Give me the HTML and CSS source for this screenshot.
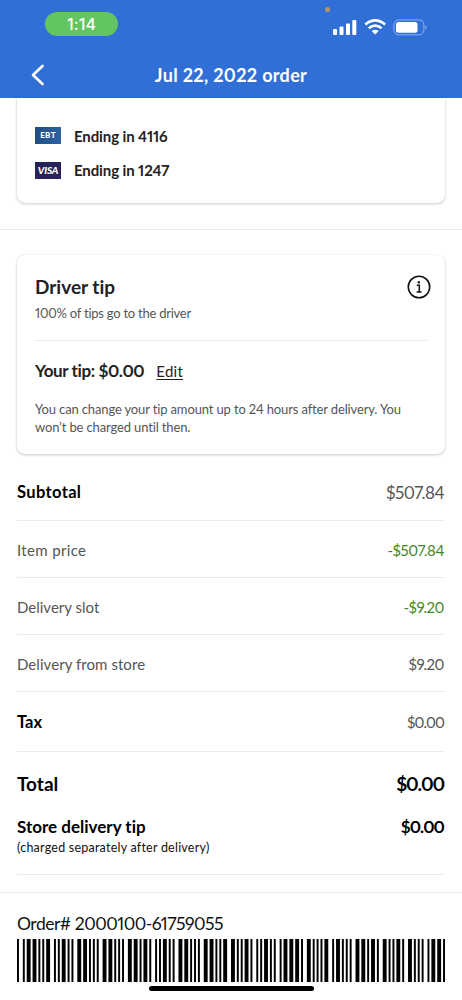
FILE: index.html
```html
<!DOCTYPE html>
<html lang="en">
<head>
<meta charset="utf-8">
<title>Jul 22, 2022 order</title>
<link rel="stylesheet" href="styles.css">
</head>
<body>
<header class="header">
  <div class="status">
    <span class="clock">1:14</span>
    <i class="mic-dot"></i>
    <svg class="status-icons" width="96" height="20" viewBox="0 0 96 20" fill="#fff">
      <rect x="2" y="11" width="4" height="6" rx="1"/><rect x="8.500" y="8.500" width="4" height="8.500" rx="1"/><rect x="15" y="5.500" width="4" height="11.500" rx="1"/><rect x="21.300" y="2" width="4" height="15" rx="1"/>
      <path d="M34.300 6.500Q44.200-1.700 54.100 6.500" fill="none" stroke="#fff" stroke-width="2.700"/>
      <path d="M37.800 10.300Q44.200 4.900 50.600 10.300" fill="none" stroke="#fff" stroke-width="2.600"/>
      <path d="M40.700 13Q44.200 10.300 47.700 13L44.200 16.600Z"/>
      <rect x="62.900" y="2" width="30" height="14.800" rx="4.500" fill="none" stroke="#8fb2ee" stroke-width="1"/>
      <rect x="65" y="4" width="21.500" height="10.800" rx="2.500"/><path d="M94.300 7.200Q97 9.400 94.300 11.600Z" fill="#8fb2ee"/>
    </svg>
  </div>
  <div class="nav">
    <svg class="back" width="14" height="22" viewBox="0 0 14 22"><path d="M11.500 2L2 11L11.500 20" fill="none" stroke="#fff" stroke-width="2.600" stroke-linecap="round" stroke-linejoin="round"/></svg>
    <h1 class="title">Jul 22, 2022 order</h1>
  </div>
</header>
<main>
  <section class="payment">
    <div class="card payment-card">
      <div class="method"><span class="logo ebt">EBT</span><span>Ending in 4116</span></div>
      <div class="method"><span class="logo visa">VISA</span><span>Ending in 1247</span></div>
    </div>
  </section>
  <section class="content">
    <div class="card tip-card">
      <div class="tip-head">
        <div><h2 class="tip-title">Driver tip</h2><p class="tip-sub">100% of tips go to the driver</p></div>
        <svg class="info" width="24" height="24" viewBox="0 0 24 24"><circle cx="12" cy="12" r="10.700" fill="none" stroke="#111" stroke-width="1.600"/><circle cx="11.800" cy="7.200" r="1.200" fill="#111"/><path d="M9.800 10.200H12.300V16.700M9.600 17H14.600" fill="none" stroke="#111" stroke-width="1.500"/></svg>
      </div>
      <div class="tip-row"><span class="tip-value">Your tip: $0.00</span><a class="edit">Edit</a></div>
      <p class="note">You can change your tip amount up to 24 hours after delivery. You<br>won’t be charged until then.</p>
    </div>
    <div class="row row-subtotal"><span class="strong">Subtotal</span><span class="amount amount-large">$507.84</span></div>
    <div class="row"><span class="label-wide">Item price</span><span class="amount green">-$507.84</span></div>
    <div class="row"><span>Delivery slot</span><span class="amount green">-$9.20</span></div>
    <div class="row"><span class="label-long">Delivery from store</span><span class="amount">$9.20</span></div>
    <div class="row row-tax"><span class="strong-tax">Tax</span><span class="amount amount-tax">$0.00</span></div>
    <div class="total"><span>Total</span><span class="total-amount">$0.00</span></div>
    <div class="store-tip"><div class="store-line"><span>Store delivery tip</span><span class="store-amount">$0.00</span></div><p class="charged">(charged separately after delivery)</p></div>
  </section>
  <footer class="order">
    <p class="order-no">Order# 2000100-61759055</p>
    <svg class="barcode" viewBox="0 0 220 43" preserveAspectRatio="none" data-code="*200010061759055*"></svg>
  </footer>
</main>
<div class="home-bar"></div>
<script src="barcode.js"></script>
</body>
</html>
```
FILE: styles.css
```css
* { box-sizing: border-box; }
body { margin: 0; width: 462px; height: 1000px; overflow: hidden; background: #fff; font-family: Lato, "Liberation Sans", sans-serif; color: #000; font-variant-numeric: proportional-nums; font-variant-ligatures: none; white-space: nowrap; }
h1, h2, p { margin: 0; font-weight: inherit; }
.header { height: 98px; background: #306fd5; color: #fff; display: flex; flex-direction: column; }
.status { height: 52px; position: relative; display: flex; justify-content: space-between; padding: 12px 35.5px 0 45px; }
.clock { width: 73px; height: 24px; border-radius: 12px; background: #61c561; font: 500 16px/24px Inter, sans-serif; text-align: center; letter-spacing: .1px; }
.status-icons { margin-top: 6px; }
.mic-dot { position: absolute; left: 325px; top: 7px; width: 5px; height: 5px; border-radius: 50%; background: #bd9461; }
.nav { height: 46px; display: grid; grid-template-columns: 31px 1fr 31px; align-items: center; }
.back { margin-left: 30.5px; }
.title { text-align: center; font-size: 18px; font-weight: 700; line-height: 24px; letter-spacing: .33px; padding-bottom: 1px; }
.payment { height: 132px; border-bottom: 1px solid #ebebeb; padding: 0 17px; }
.card { background: #fff; border-radius: 8px; box-shadow: 0 1px 3px #0003, 0 0 1px #0002; }
.payment-card { height: 105px; border-radius: 0 0 8px 8px; padding: 20.5px 18px 0; }
.method { display: flex; align-items: center; gap: 13px; height: 34.5px; font-size: 15px; font-weight: 700; color: #222; letter-spacing: -.11px; }
.logo { width: 26px; height: 17px; color: #fff; text-align: center; }
.ebt { background: linear-gradient(90deg, #214e83, #2d62a3); font: 900 8px/17px Lato, sans-serif; letter-spacing: .3px; }
.visa { background: #272358; font: italic 900 10px/17px Lato, sans-serif; }
.content { padding: 25px 17px 0; height: 663px; border-bottom: 1px solid #ebebeb; }
.tip-card { height: 199px; padding: 19px 17px 0 18px; }
.tip-head { display: flex; justify-content: space-between; height: 67px; border-bottom: 1px solid #ebebeb; }
.info { margin: 1px -3px 0 0; }
.tip-title { font-size: 19px; font-weight: 700; line-height: 26px; color: #222; }
.tip-sub { font-size: 13px; line-height: 18px; margin-top: 4px; color: #555; letter-spacing: -.24px; }
.tip-row { display: flex; align-items: baseline; gap: 12px; margin-top: 18px; line-height: 24px; font-size: 17px; font-weight: 700; color: #222; }
.tip-value { letter-spacing: -.39px; }
.edit { font-size: 15px; font-weight: 400; text-decoration: underline; text-underline-offset: 2px; letter-spacing: .26px; }
.note { margin-top: 17px; font-size: 13px; line-height: 18px; color: #555; letter-spacing: -.14px; }
.row { height: 57px; padding-top: 1px; display: flex; align-items: center; justify-content: space-between; border-bottom: 1px solid #ebebeb; font-size: 15px; color: #555; }
.row-subtotal { height: 67px; padding-top: 10px; }
.row-tax { height: 60px; }
.strong { font-size: 16.5px; font-weight: 700; color: #000; letter-spacing: .36px; }
.strong-tax { font-size: 16.5px; font-weight: 700; color: #000; }
.label-wide { letter-spacing: .35px; }
.label-long { letter-spacing: .06px; }
.amount { letter-spacing: -.44px; padding-right: 1px; }
.amount-large { font-size: 17px; letter-spacing: -.55px; }
.amount-tax { letter-spacing: -.85px; }
.green { color: #44862b; }
.total { display: flex; justify-content: space-between; margin-top: 19px; font-size: 19px; line-height: 26px; font-weight: 700; }
.total-amount { letter-spacing: -1.1px; padding-right: 1px; }
.store-tip { margin-top: 18px; height: 60px; border-bottom: 1px solid #ebebeb; }
.store-line { display: flex; justify-content: space-between; font-size: 17px; line-height: 24px; font-weight: 700; }
.store-amount { letter-spacing: -.9px; padding-right: 1px; }
.charged { font-size: 12.5px; line-height: 18px; color: #111; letter-spacing: .23px; }
.order { padding: 18px 17px 0; }
.order-no { font-size: 17.5px; line-height: 26px; color: #111; letter-spacing: -.48px; }
.barcode { display: block; width: 428px; height: 43px; margin-top: 2px; }
.home-bar { position: absolute; left: 149px; top: 986px; width: 165px; height: 5px; border-radius: 3px; background: #000; }
```
FILE: barcode.js
```js
// Code 39: bars and spaces alternate; n = one module, w = two modules.
const CODE39 = {
  "0": "nnnwwnwnn", "1": "wnnwnnnnw", "2": "nnwwnnnnw", "3": "wnwwnnnnn",
  "4": "nnnwwnnnw", "5": "wnnwwnnnn", "6": "nnwwwnnnn", "7": "nnnwnnwnw",
  "8": "wnnwnnwnn", "9": "nnwwnnwnn", "*": "nwnnwnwnn"
};
const barcode = document.querySelector(".barcode");
let x = 0, d = "";
for (const ch of barcode.dataset.code) {
  [...CODE39[ch]].forEach((c, i) => {
    const w = c === "w" ? 2 : 1;
    if (i % 2 === 0) d += `M${x} 0h${w}v43h-${w}z`;
    x += w;
  });
  x += 1;
}
const path = document.createElementNS("http://www.w3.org/2000/svg", "path");
path.setAttribute("d", d);
barcode.append(path);
```
